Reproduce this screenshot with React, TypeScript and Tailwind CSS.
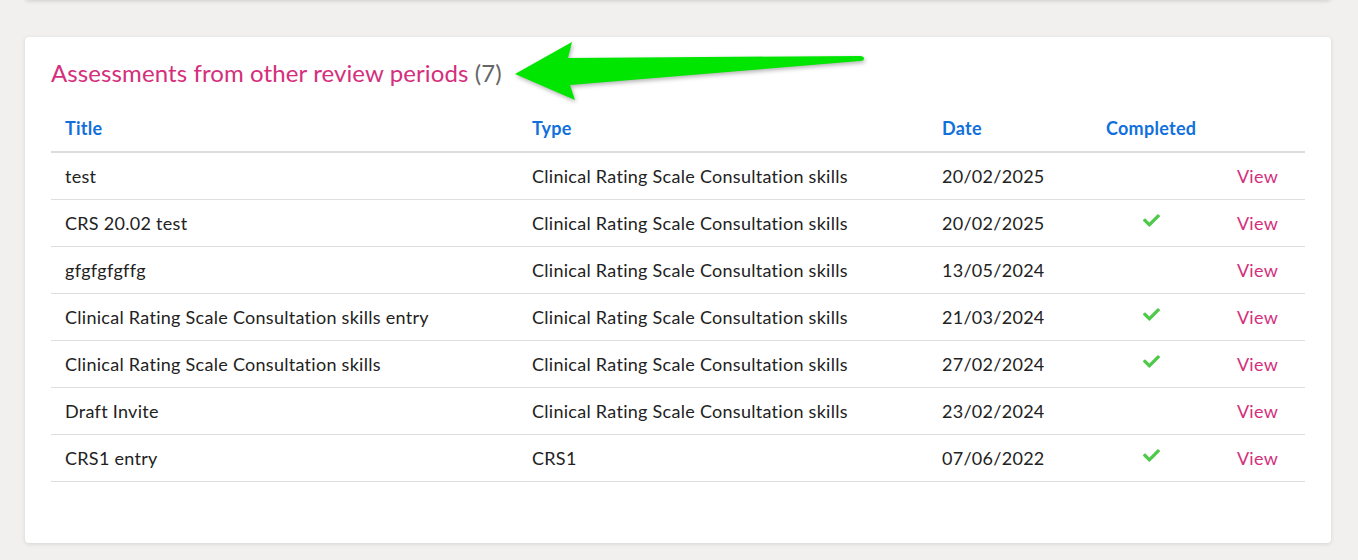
import { FaCheck } from 'react-icons/fa';

type Assessment = {
  title: string;
  type: string;
  date: string;
  completed: boolean;
};

const assessments: Assessment[] = [
  { title: 'test', type: 'Clinical Rating Scale Consultation skills', date: '20/02/2025', completed: false },
  { title: 'CRS 20.02 test', type: 'Clinical Rating Scale Consultation skills', date: '20/02/2025', completed: true },
  { title: 'gfgfgfgffg', type: 'Clinical Rating Scale Consultation skills', date: '13/05/2024', completed: false },
  {
    title: 'Clinical Rating Scale Consultation skills entry',
    type: 'Clinical Rating Scale Consultation skills',
    date: '21/03/2024',
    completed: true,
  },
  {
    title: 'Clinical Rating Scale Consultation skills',
    type: 'Clinical Rating Scale Consultation skills',
    date: '27/02/2024',
    completed: true,
  },
  { title: 'Draft Invite', type: 'Clinical Rating Scale Consultation skills', date: '23/02/2024', completed: false },
  { title: 'CRS1 entry', type: 'CRS1', date: '07/06/2022', completed: true },
];

const cols = 'grid grid-cols-[467px_410px_164px_118px_95px] items-center';

// annotation arrow drawn over the card
const Arrow = () => (
  <svg
    className="absolute left-[480px] top-[1px] drop-shadow-[1px_2px_2px_rgba(0,0,0,0.3)]"
    width="365"
    height="68"
    viewBox="0 0 365 68"
  >
    <path
      d="M10 36 L67 4 L63 20 L355 18 Q359 18 359 20.5 Q359 23 355 23 L65 47 L70 62 Z"
      fill="#00e600"
    />
  </svg>
);

export default function App() {
  return (
    <div className="min-h-screen bg-[#f1f0ee] px-[25px] pt-[37px] font-['Lato','Open_Sans',sans-serif] text-[#222]">
      <div className="-mt-[77px] mb-[37px] h-10 w-[1306px] rounded bg-white shadow-[0_1px_4px_rgba(0,0,0,0.15)]" />
      <div className="relative w-[1306px] rounded bg-white px-[26px] pt-[20px] pb-[61px] shadow-[0_1px_4px_rgba(0,0,0,0.12)]">
        <h2 className="text-[24px] leading-8 tracking-[0.1px] text-[#d42f7c]">
          Assessments from other review periods <span className="text-[#666]">(7)</span>
        </h2>
        <Arrow />
        <div className="mt-[15px] text-[18px] tracking-[0.28px]">
          <div className={`${cols} h-[49px] border-b-2 border-[#dcdcda] pt-[2px] font-bold text-[#1170dc]`}>
            <span className="pl-[14px]">Title</span>
            <span className="pl-[14px]">Type</span>
            <span className="pl-[14px]">Date</span>
            <span className="pl-[14px]">Completed</span>
            <span />
          </div>
          {assessments.map((a) => (
            <div key={a.title + a.date} className={`${cols} h-[47px] border-b border-[#dedede]`}>
              <span className="pl-[14px]">{a.title}</span>
              <span className="pl-[14px]">{a.type}</span>
              <span className="pl-[14px]">{a.date}</span>
              <span className="flex justify-center">
                {a.completed && <FaCheck className="-mt-[6px] text-[#4fc94a]" size={17} />}
              </span>
              <span className="text-center text-[#d42f7c]">View</span>
            </div>
          ))}
        </div>
      </div>
    </div>
  );
}
